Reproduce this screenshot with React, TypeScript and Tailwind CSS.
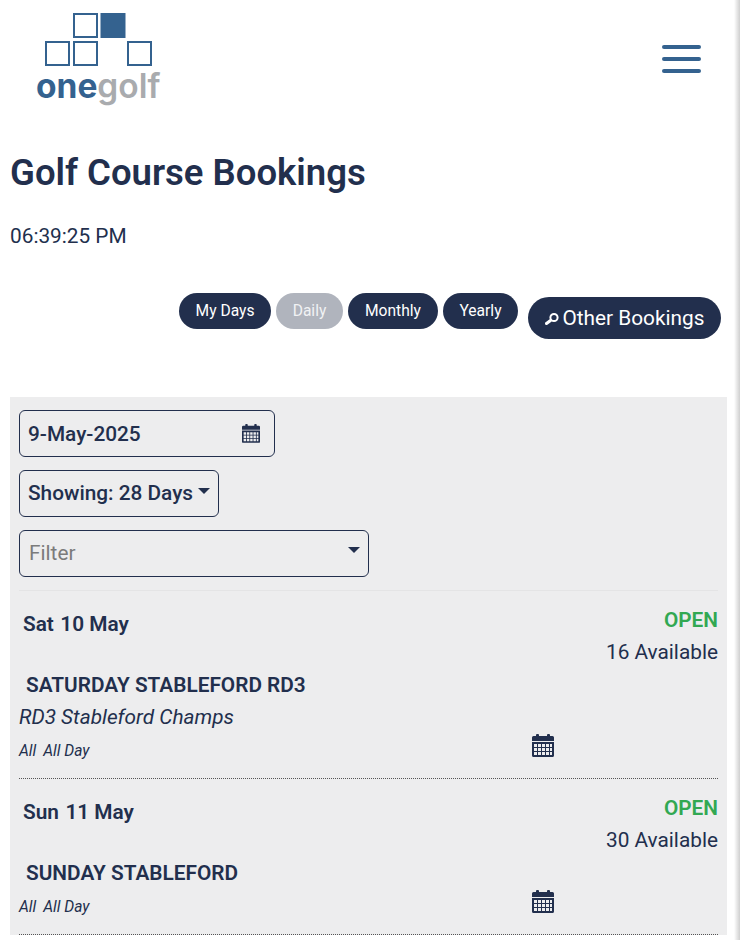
const NAVY = "#222f4d";

function CalendarIcon({ size = 18 }: { size?: number }) {
  return (
    <svg width={size} height={size * 1.05} viewBox="0 0 22 23" className="block" fill="#222f4d">
      <rect x="4" y="0" width="3" height="4" rx="1" />
      <rect x="15" y="0" width="3" height="4" rx="1" />
      <path d="M1.5 2h19A1.5 1.5 0 0 1 22 3.500V7H0V3.500A1.500 1.500 0 0 1 1.500 2Z" />
      <path
        fillRule="evenodd"
        d="M0 8h22v13.500a1.500 1.500 0 0 1-1.500 1.500h-19A1.500 1.500 0 0 1 0 21.500ZM2 10v3h3v-3Zm4 0v3h3v-3Zm4 0v3h3v-3Zm4 0v3h3v-3Zm4 0v3h2v-3ZM2 14v3h3v-3Zm4 0v3h3v-3Zm4 0v3h3v-3Zm4 0v3h3v-3Zm4 0v3h2v-3ZM2 18v3h3v-3Zm4 0v3h3v-3Zm4 0v3h3v-3Zm4 0v3h3v-3Zm4 0v3h2v-3Z"
      />
    </svg>
  );
}

function Caret() {
  return <span className="block h-0 w-0 border-x-[6px] border-t-[6px] border-x-transparent border-t-[#222f4d]" />;
}

function Logo() {
  const c = "#34628f";
  return (
    <div className="flex w-[124px] flex-col">
      <svg width="124" height="56" viewBox="0 0 124 56" className="block">
        <g fill="none" stroke={c} strokeWidth="2">
          <rect x="38" y="2" width="23" height="23" />
          <rect x="10" y="30" width="23" height="23" />
          <rect x="38" y="30" width="23" height="23" />
          <rect x="92" y="30" width="23" height="23" />
        </g>
        <rect x="64.500" y="1" width="25" height="25" fill={c} />
      </svg>
      <div className="flex whitespace-nowrap font-['Inter',sans-serif] text-[33.500px] leading-[36px] font-bold">
        <span className="text-[#34628f]">one</span>
        <span className="font-semibold text-[#a9abae]">golf</span>
      </div>
    </div>
  );
}

function Pill({ label, width, muted }: { label: string; width: string; muted?: boolean }) {
  return (
    <span
      className={`flex h-[36px] items-center justify-center rounded-full pt-[1px] text-[15.6px] ${width} ${
        muted ? "bg-[#b0b4bd] text-[#f1f2f4]" : "bg-[#222f4d] text-white"
      }`}
    >
      {label}
    </span>
  );
}

function Booking({
  day,
  date,
  available,
  title,
  subtitle,
}: {
  day: string;
  date: string;
  available: string;
  title: string;
  subtitle?: string;
}) {
  return (
    <div className="border-b border-dotted border-[#555] pt-[13px] pb-[14px]">
      <div className="flex items-start justify-between">
        <div className="flex gap-[6.5px] pt-[6px] pl-[4px] text-[20.8px] leading-[28px] font-semibold">
          <span>{day}</span>
          <span>{date}</span>
        </div>
        <div className="text-right text-[20.8px] leading-[32px]">
          <div className="font-semibold text-[#32a852]">OPEN</div>
          <div>{available}</div>
        </div>
      </div>
      <div className="mt-[3px] pl-[7px] text-[20.8px] leading-[28px] font-semibold">{title}</div>
      {subtitle && <div className="mt-[3px] text-[20.8px] leading-[30px] italic">{subtitle}</div>}
      <div className={`relative flex h-[24px] items-center ${subtitle ? "mt-[8px]" : "mt-[9px]"}`}>
        <span className="flex gap-[7px] text-[15.6px] italic">
          <span>All</span>
          <span>All Day</span>
        </span>
        <span className="absolute top-[-6px] left-[513px]">
          <CalendarIcon size={22} />
        </span>
      </div>
    </div>
  );
}

export default function App() {
  return (
    <div
      className="relative h-[940px] w-full overflow-hidden bg-white font-['Roboto',sans-serif]"
      style={{ color: NAVY }}
    >
      <header className="flex h-[130px] items-start justify-between pt-[12px] pr-[39px] pl-[36px]">
        <Logo />
        <div className="mt-[33px] flex w-[39px] flex-col gap-[8px]">
          <span className="h-[4px] rounded-full bg-[#34628f]" />
          <span className="h-[4px] rounded-full bg-[#34628f]" />
          <span className="h-[4px] rounded-full bg-[#34628f]" />
        </div>
      </header>

      <h1 className="mt-[21px] pl-[10px] text-[36.5px] leading-[44px] font-semibold">Golf Course Bookings</h1>
      <p className="mt-[26px] pl-[10px] text-[20.8px] leading-[30px]">06:39:25 PM</p>

      <div className="mt-[42px] flex items-start justify-end gap-[5px] pr-[19px]">
        <Pill label="My Days" width="w-[92px]" />
        <Pill label="Daily" width="w-[67px]" muted />
        <Pill label="Monthly" width="w-[90px]" />
        <Pill label="Yearly" width="w-[75px]" />
        <span className="mt-[4px] ml-[5px] flex h-[42px] w-[193px] items-center justify-center gap-[4px] rounded-full bg-[#222f4d] pt-[1px] text-[20.8px] text-white">
          <svg width="14" height="14" viewBox="0 0 14 14" fill="none" stroke="white" className="block">
            <circle cx="9" cy="5.500" r="3.600" strokeWidth="2" />
            <path d="M5.500 8.500 1.500 11.500" strokeWidth="3" strokeLinecap="round" />
          </svg>
          Other Bookings
        </span>
      </div>

      <main className="mt-[58px] mr-[13px] ml-[10px] bg-[#ededee] px-[9px] pt-[13px]">
        <div className="flex h-[47px] w-[256px] items-center justify-between rounded-[6px] border border-[#222f4d] pr-[14px] pl-[8px] text-[20.8px] font-medium">
          <span className="pt-[2px]">9-May-2025</span>
          <CalendarIcon size={18} />
        </div>
        <div className="mt-[13px] flex h-[47px] w-[200px] items-center gap-[5px] rounded-[6px] border border-[#222f4d] pl-[8px] text-[20.8px] font-medium">
          Showing: 28 Days
          <span className="mb-[6px]">
            <Caret />
          </span>
        </div>
        <div className="mt-[13px] flex h-[47px] w-[350px] items-start justify-between rounded-[6px] border border-[#222f4d] pr-[8px] pl-[9px] text-[20.8px]">
          <span className="pt-[8px] leading-[28px] text-[#7b7b7b]">Filter</span>
          <span className="pt-[16px]">
            <Caret />
          </span>
        </div>
        <div className="mt-[13px] border-t border-[#e4e4e5]">
          <Booking
            day="Sat"
            date="10 May"
            available="16 Available"
            title="SATURDAY STABLEFORD RD3"
            subtitle="RD3 Stableford Champs"
          />
          <Booking day="Sun" date="11 May" available="30 Available" title="SUNDAY STABLEFORD" />
        </div>
      </main>

      <div className="absolute inset-y-0 right-0 w-[6px] bg-gradient-to-r from-white to-[#cfcfcf]" />
    </div>
  );
}
